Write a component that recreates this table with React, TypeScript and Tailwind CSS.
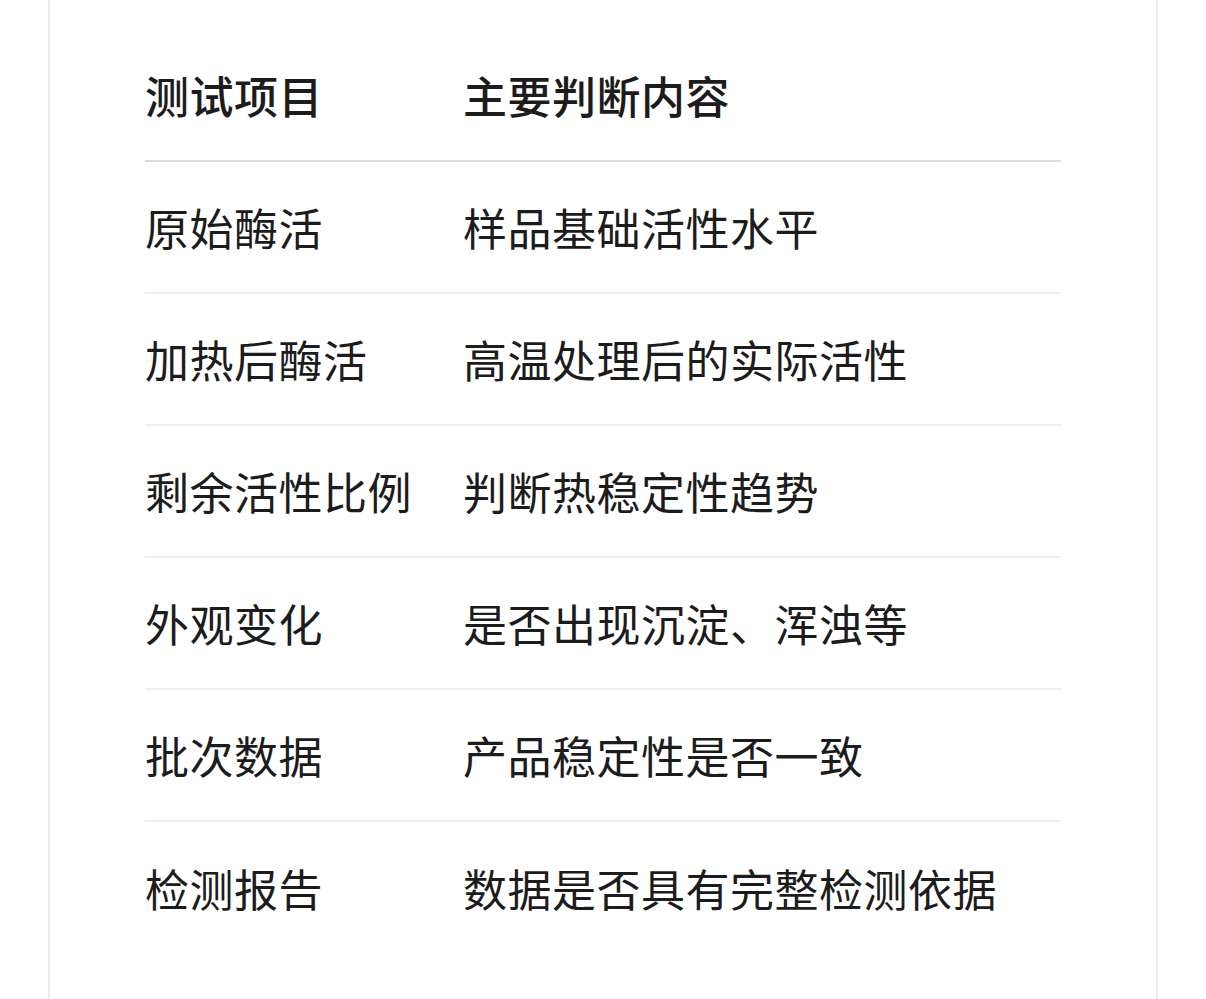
const rows: [string, string][] = [
  ['原始酶活', '样品基础活性水平'],
  ['加热后酶活', '高温处理后的实际活性'],
  ['剩余活性比例', '判断热稳定性趋势'],
  ['外观变化', '是否出现沉淀、浑浊等'],
  ['批次数据', '产品稳定性是否一致'],
  ['检测报告', '数据是否具有完整检测依据'],
]

export default function App() {
  return (
    <div
      className="min-h-screen bg-white"
      style={{ fontFamily: '"Noto Sans CJK SC", "Noto Sans", sans-serif' }}
    >
      <div className="mx-[48px] min-h-[999px] border-x-2 border-[#ededed] bg-white px-[95px] pt-[29px]">
        <table className="w-full border-collapse text-[44px] leading-none tracking-[0.5px] text-[#1c1c1c]">
          <thead>
            <tr className="h-[132px] border-b-2 border-[#dddddd]">
              <th className="w-[318px] p-0 text-left font-medium">测试项目</th>
              <th className="p-0 text-left font-medium">主要判断内容</th>
            </tr>
          </thead>
          <tbody>
            {rows.map(([item, desc], i) => (
              <tr
                key={item}
                className={
                  i < rows.length - 1
                    ? 'h-[132px] border-b-2 border-[#eeeeee]'
                    : 'h-[132px]'
                }
              >
                <td className="p-0 font-normal">{item}</td>
                <td className="p-0 font-normal">{desc}</td>
              </tr>
            ))}
          </tbody>
        </table>
      </div>
    </div>
  )
}
